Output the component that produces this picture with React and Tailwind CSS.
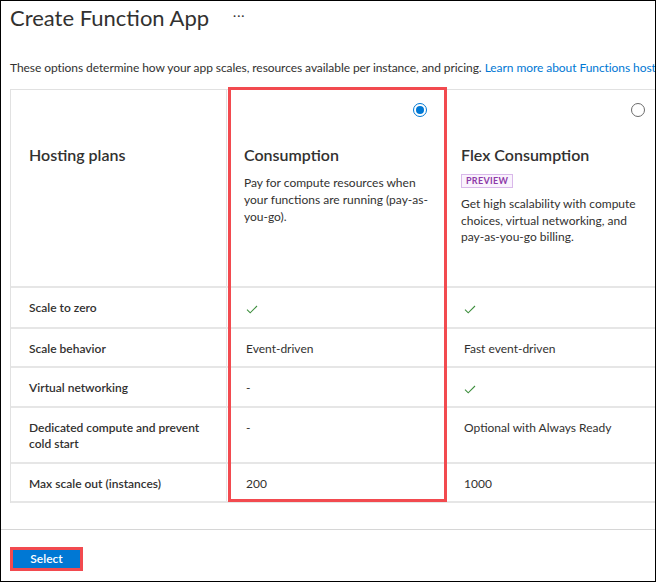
import React from 'react';

const rows = [
  { label: ['Scale to zero'], a: 'check', b: 'check', h: 'h-[41px]' },
  { label: ['Scale behavior'], a: 'Event-driven', b: 'Fast event-driven', h: 'h-[39px]' },
  { label: ['Virtual networking'], a: '-', b: 'check', h: 'h-[40px]' },
  { label: ['Dedicated compute and prevent', 'cold start'], a: '-', b: 'Optional with Always Ready', h: 'h-[56px]' },
  { label: ['Max scale out (instances)'], a: '200', b: '1000', h: 'h-[39px]' },
];

function Check() {
  return (
    <svg width="12" height="9" viewBox="0 0 12 9" className="mt-[5px]">
      <path d="M1 4.6 L4.2 7.8 L11 1" fill="none" stroke="#3f8f3f" strokeWidth="1.1" />
    </svg>
  );
}

function Value({ v }) {
  if (v === 'check') return <Check />;
  return <span>{v}</span>;
}

function Radio({ on }) {
  return on ? (
    <div className="w-[14px] h-[14px] rounded-full border border-[#0078d4] flex items-center justify-center">
      <div className="w-[8px] h-[8px] rounded-full bg-[#0078d4]" />
    </div>
  ) : (
    <div className="w-[14px] h-[14px] rounded-full border border-[#6b6b6b]" />
  );
}

export default function App() {
  return (
    <div className="w-[657px] h-[583px] bg-white">
      <div
        className="w-[656px] h-[582px] border border-black flex flex-col overflow-hidden text-[#323130]"
        style={{ fontFamily: 'Lato, "Open Sans", sans-serif' }}
      >
        {/* title */}
        <div className="h-[34px] pl-[9px] flex items-center">
          <h1 className="text-[22px] leading-[30px] font-normal">Create Function App</h1>
          <span className="ml-[24px] text-[12px] tracking-[1px] mt-[-4px]">···</span>
        </div>

        <div className="mt-[25px] h-[16px] pl-[9px] text-[12px] leading-[16px] whitespace-nowrap tracking-[-0.07px]">
          These options determine how your app scales, resources available per instance, and pricing.{' '}
          <span className="text-[#0078d4]">Learn more about Functions hosting</span>
        </div>

        {/* plans table */}
        <div className="mt-[13px] ml-[9px] relative w-[657px]">
          <div className="grid grid-cols-[216px_220px_220px] border-t border-l border-[#e1e1e1] text-[12px] leading-[16px]">
            <div className="h-[196px] border-r border-[#e1e1e1] pl-[18px] pt-[54px]">
              <div className="text-[16px] leading-[22px] font-semibold">Hosting plans</div>
            </div>
            <div className="h-[196px] pl-[17px] pr-[20px] pt-[13px]">
              <div className="flex justify-end"><Radio on /></div>
              <div className="mt-[27px] text-[16px] leading-[22px] font-semibold">Consumption</div>
              <div className="mt-[8px] leading-[17px] whitespace-nowrap">
                Pay for compute resources when<br />
                your functions are running (pay-as-<br />
                you-go).
              </div>
            </div>
            <div className="h-[196px] pl-[14px] pr-[20px] pt-[13px]">
              <div className="flex justify-end pr-[2px]"><Radio /></div>
              <div className="mt-[27px] text-[16px] leading-[22px] font-semibold">Flex Consumption</div>
              <div className="mt-[8px] inline-flex items-center h-[14px] px-[4px] border border-[#d9b8ea] bg-[#faf3fd] text-[#8e3aa8] text-[9px] font-bold tracking-[0.3px]">
                PREVIEW
              </div>
              <div className="mt-[8px] leading-[16.5px] whitespace-nowrap">
                Get high scalability with compute<br />
                choices, virtual networking, and<br />
                pay-as-you-go billing.
              </div>
            </div>

            {rows.map((r, i) => (
              <React.Fragment key={i}>
                <div className={`${r.h} border-t-2 border-r border-[#e6e6e6] pl-[18px] pt-[12px] font-semibold`}>
                  {r.label.map((l, j) => <div key={j}>{l}</div>)}
                </div>
                <div className={`${r.h} border-t-2 border-[#e6e6e6] pl-[19px] pt-[12px]`}>
                  <Value v={r.a} />
                </div>
                <div className={`${r.h} border-t-2 border-[#e6e6e6] pl-[17px] pt-[12px] whitespace-nowrap`}>
                  <Value v={r.b} />
                </div>
              </React.Fragment>
            ))}
            <div className="col-span-3 border-t-2 border-[#e6e6e6]" />
          </div>

          {/* highlight around the selected plan */}
          <div className="absolute left-[218px] top-[-2px] w-[219px] h-[415px] border-[3px] border-[#f24a4f] pointer-events-none" />
        </div>

        {/* footer */}
        <div className="mt-auto h-[52px] border-t border-[#d6d6d6] pl-[9px] pt-[17px]">
          <div className="flex w-fit border-[3px] border-[#f24a4f]">
            <button className="w-[67px] h-[18px] bg-[#0078d4] text-white text-[12px] leading-[18px] font-semibold">
              Select
            </button>
          </div>
        </div>
      </div>
    </div>
  );
}
